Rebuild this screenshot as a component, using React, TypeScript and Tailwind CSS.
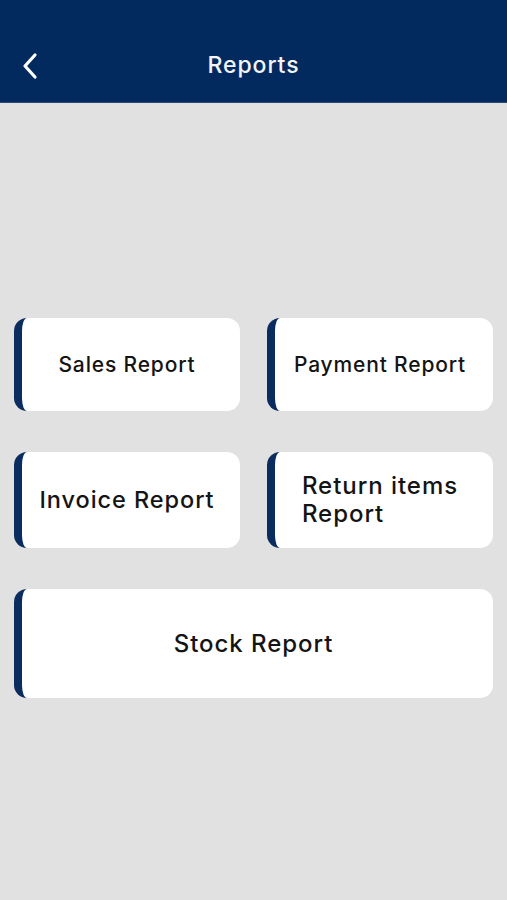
import { ReactNode } from "react";

function Card({ children, className = "" }: { children: ReactNode; className?: string }) {
  return (
    <button
      className={`flex items-center justify-center rounded-[13px] border-l-[8px] border-[#0a2c5e] bg-white pr-[8px] text-[#141414] ${className}`}
    >
      {children}
    </button>
  );
}

export default function App() {
  return (
    <div
      className="flex min-h-[900px] w-full flex-col bg-[#e1e1e1]"
      style={{ fontFamily: "Inter, 'Noto Sans', sans-serif" }}
    >
      <header className="relative flex h-[103px] items-end justify-center border-b border-[#2a4a78] bg-[#032a5e] pb-[20px]">
        <svg
          className="absolute left-[20px] top-[52px]"
          width="20"
          height="28"
          viewBox="0 0 20 28"
          fill="none"
          stroke="#ffffff"
          strokeWidth="3.2"
          strokeLinecap="round"
          strokeLinejoin="round"
        >
          <path d="M15 3 L5 14 L15 25" />
        </svg>
        <h1 className="text-[23px] font-medium tracking-[0.04em] text-[#f2f4f7]">Reports</h1>
      </header>

      <main className="flex flex-col gap-[41px] px-[14px] pt-[215px]">
        <div className="grid grid-cols-2 gap-[27px]">
          <Card className="h-[93px]">
            <span className="text-[21px] font-medium tracking-[0.04em]">Sales Report</span>
          </Card>
          <Card className="h-[93px]">
            <span className="text-[21px] font-medium tracking-[0.04em]">Payment Report</span>
          </Card>
        </div>
        <div className="grid grid-cols-2 gap-[27px]">
          <Card className="h-[96px]">
            <span className="text-[23.5px] font-medium tracking-[0.04em]">Invoice Report</span>
          </Card>
          <Card className="h-[96px]">
            <span className="text-left text-[24px] font-medium leading-[28px] tracking-[0.04em]">
              Return items
              <br />
              Report
            </span>
          </Card>
        </div>
        <Card className="h-[109px]">
          <span className="text-[24px] font-medium tracking-[0.04em]">Stock Report</span>
        </Card>
      </main>
    </div>
  );
}
